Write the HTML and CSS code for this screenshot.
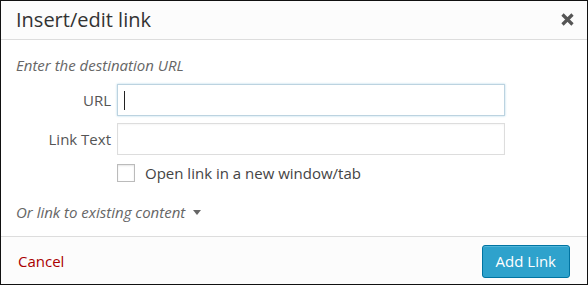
FILE: index.html
```html
<!DOCTYPE html>
<html lang="en">
<head>
  <meta charset="UTF-8">
  <title>Insert/edit link</title>
  <link rel="stylesheet" href="styles.css">
</head>
<body>

  <div class="dialog">
    <div class="header">
      <h1>Insert/edit link</h1>
      <span class="close">
        <svg width="13" height="13" viewBox="0 0 13 13"><path d="M1.5 1.5 L11.5 11.5 M11.5 1.5 L1.5 11.5" stroke="#555" stroke-width="3.2" stroke-linecap="butt"/></svg>
      </span>
    </div>

    <div class="content">
      <p class="hint">Enter the destination URL</p>

      <div class="row">
        <label class="label">URL</label>
        <div class="field focused"><span class="caret"></span></div>
      </div>
      <div class="row">
        <label class="label">Link Text</label>
        <div class="field"></div>
      </div>
      <div class="row check-row">
        <span class="checkbox"></span>
        <span class="check-label">Open link in a new window/tab</span>
      </div>

      <p class="toggle">Or link to existing content <span class="arrow"></span></p>
    </div>

    <div class="footer">
      <a class="cancel" href="#">Cancel</a>
      <button class="submit">Add Link</button>
    </div>
  </div>

</body>
</html>
```

FILE: styles.css
```css
body {
  margin: 0;
  font-family: 'Open Sans', 'Liberation Sans', sans-serif;
  color: #555;
}
.dialog {
  width: 588px;
  height: 285px;
  box-sizing: border-box;
  border: 1px solid #111;
  background: #fff;
  display: flex;
  flex-direction: column;
}
.header {
  height: 38px;
  background: #fcfcfc;
  border-bottom: 1px solid #ddd;
  display: flex;
  align-items: center;
  justify-content: space-between;
  padding: 0 13px 0 15px;
}
.header h1 {
  margin: -2px 0 0;
  font-size: 20px;
  font-weight: 400;
  color: #333;
}
.close {
  display: flex;
  margin-top: -2px;
}
.content {
  flex: 1;
  padding: 15px 82px 0 15px;
}
.hint {
  margin: 0 0 9px;
  font-size: 15px;
  line-height: 20px;
  font-style: italic;
  color: #666;
}
.row {
  display: flex;
  align-items: center;
  margin-bottom: 7px;
}
.label {
  width: 95px;
  margin-right: 6px;
  text-align: right;
  font-size: 15px;
  color: #555;
}
.field {
  flex: 1;
  height: 30px;
  border: 1px solid #ddd;
  box-shadow: inset 0 1px 2px rgba(0, 0, 0, 0.04);
  display: flex;
  align-items: center;
}
.field.focused {
  border-color: #bcd3e0;
  box-shadow: 0 0 2px rgba(30, 140, 190, 0.35);
}
.caret {
  width: 1px;
  height: 19px;
  margin-left: 6px;
  background: #222;
}
.check-row {
  margin: 8px 0 0 101px;
}
.checkbox {
  width: 16px;
  height: 16px;
  border: 1px solid #bbb;
  box-shadow: inset 0 1px 2px rgba(0, 0, 0, 0.1);
  margin-right: 10px;
}
.check-label {
  font-size: 15px;
  color: #444;
}
.toggle {
  margin: 19px 0 0;
  font-size: 15px;
  font-style: italic;
  color: #666;
  display: flex;
  align-items: center;
}
.arrow {
  display: inline-block;
  margin-left: 8px;
  width: 0;
  height: 0;
  border-left: 4px solid transparent;
  border-right: 4px solid transparent;
  border-top: 5px solid #666;
}
.footer {
  height: 47px;
  background: #fcfcfc;
  border-top: 1px solid #ddd;
  display: flex;
  align-items: center;
  justify-content: space-between;
  padding: 0 17px 0 17px;
}
.cancel {
  color: #a00;
  text-decoration: none;
  font-size: 15px;
}
.submit {
  height: 33px;
  padding: 0 13px;
  background: #2ea2cc;
  border: 1px solid #0074a2;
  border-radius: 3px;
  box-shadow: inset 0 1px 0 rgba(120, 200, 230, 0.5);
  color: #fff;
  font-family: 'Open Sans', 'Liberation Sans', sans-serif;
  font-size: 15px;
  margin-top: 1px;
}
```
